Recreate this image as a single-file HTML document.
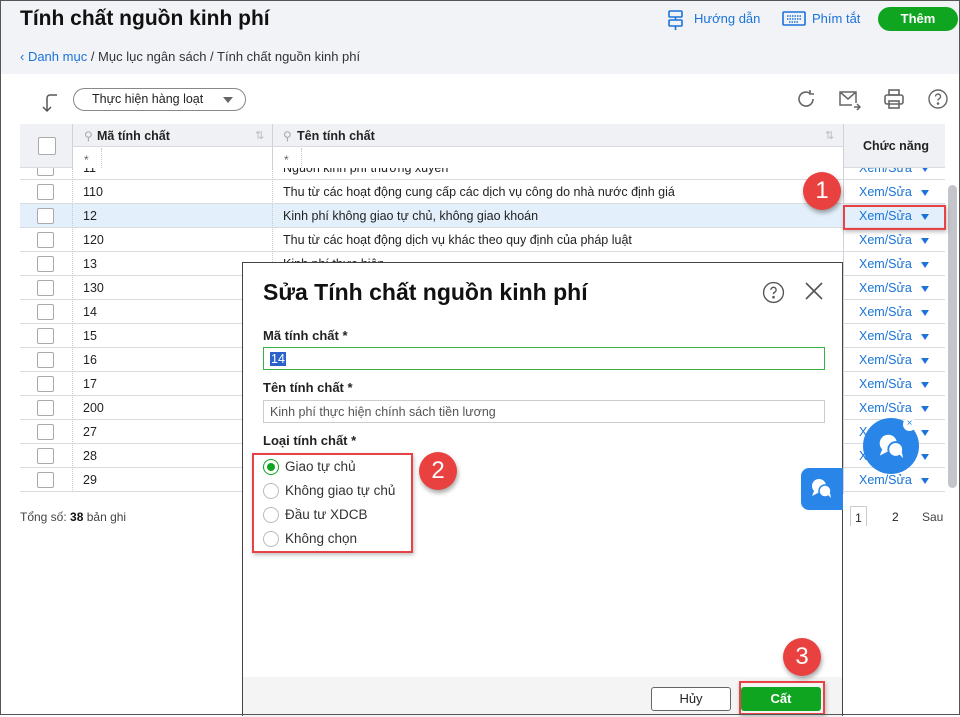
<!DOCTYPE html>
<html><head><meta charset="utf-8">
<style>
*{box-sizing:border-box;margin:0;padding:0}
body{width:960px;height:715px;overflow:hidden;font-family:"Liberation Sans",sans-serif;font-size:12px;color:#222;background:#fff;position:relative}
.frame{position:absolute;left:0;top:0;width:960px;height:715px;border:1px solid #555;pointer-events:none;z-index:50}
.top{position:absolute;left:0;top:0;width:960px;height:74px;background:#f2f3f7}
.a{position:absolute}
.title{left:20px;top:7px;font-size:21px;font-weight:bold;color:#111}
.bc{left:20px;top:49px;font-size:13px;color:#333}
.bc b{color:#1a73d9;font-weight:normal}
.blue{color:#1a73d9}
.row{position:absolute;left:20px;width:925px;height:24px;border-bottom:1px solid #d9dbe0;font-size:12.5px}
.row .cb{position:absolute;left:17px;top:4px;width:17px;height:16px;border:1px solid #aaa;border-radius:2px;background:#fff}
.row .c1{position:absolute;left:63px;top:5px}
.row .c2{position:absolute;left:263px;top:5px}
.row .c3{position:absolute;left:839px;top:5px;color:#1a73d9}
.row .c3:after{content:"";position:absolute;left:62px;top:5px;border:4px solid transparent;border-top:6px solid #1a73d9;border-bottom:0}
.vl{position:absolute;border-left:1px dotted #c7c9cf}
.lbl{font-size:13px;font-weight:bold;color:#222}
.inp{position:absolute;left:263px;width:562px;height:23px;border:1px solid #ccc;background:#fff;font-size:12.5px;padding:4px 6px;color:#555}
.rad{position:absolute;left:263px;width:16px;height:16px;border:1px solid #bbb;border-radius:50%;background:#fff}
.rt{position:absolute;left:285px;font-size:13.5px;color:#333}
.badge{position:absolute;width:38px;height:38px;border-radius:50%;background:#e8413f;color:#fff;font-size:24px;text-align:center;line-height:38px;box-shadow:1px 3px 5px rgba(0,0,0,.35);z-index:20}
.redbox{position:absolute;border:2px solid #e84245;z-index:19;box-shadow:1px 2px 4px rgba(0,0,0,.25)}
</style></head><body>
<div class="top"></div>
<div class="a title">Tính chất nguồn kinh phí</div>
<div class="a bc"><b>&lsaquo; Danh mục</b> / Mục lục ngân sách / Tính chất nguồn kinh phí</div>
<svg class="a" style="left:666px;top:9px" width="20" height="22" viewBox="0 0 20 22" fill="none" stroke="#1a73d9" stroke-width="1.6"><rect x="3" y="2" width="13" height="6" rx="1"/><rect x="3" y="11" width="13" height="6" rx="1"/><path d="M9.5 8v3M9.5 17v4"/></svg>
<div class="a blue" style="left:694px;top:11px;font-size:13px">Hướng dẫn</div>
<svg class="a" style="left:782px;top:11px" width="24" height="16" viewBox="0 0 24 16" fill="none" stroke="#1a73d9" stroke-width="1.6"><rect x="1" y="1" width="22" height="13" rx="1"/><path d="M5 5h14M5 8h14M7 11h10" stroke-dasharray="1.5 1"/></svg>
<div class="a blue" style="left:812px;top:11px;font-size:13px">Phím tắt</div>
<div class="a" style="left:878px;top:7px;width:80px;height:24px;border-radius:12px;background:#10a520;color:#fff;font-weight:bold;font-size:13px;text-align:center;line-height:24px">Thêm</div>

<svg class="a" style="left:40px;top:92px" width="20" height="22" viewBox="0 0 20 22" fill="none" stroke="#555" stroke-width="1.5"><path d="M17 3h-7a3 3 0 0 0-3 3v13M3 15l4 4 4-4"/></svg>
<div class="a" style="left:73px;top:88px;width:173px;height:23px;border:1.5px solid #888;border-radius:12px;font-size:12.5px;padding:3px 0 0 18px">Thực hiện hàng loạt<span style="position:absolute;right:12px;top:8px;border:5px solid transparent;border-top:6px solid #666;border-bottom:0"></span></div>
<svg class="a" style="left:795px;top:88px" width="22" height="22" viewBox="0 0 22 22" fill="none" stroke="#666" stroke-width="1.6"><path d="M18 11a7 7 0 1 1-3-5.7M15 2v4h4"/></svg>
<svg class="a" style="left:838px;top:89px" width="24" height="22" viewBox="0 0 24 22" fill="none" stroke="#666" stroke-width="1.5"><path d="M18 14V3H2v13h12M2 3l8 7 8-7M16 18h6M19 15l3 3-3 3"/></svg>
<svg class="a" style="left:883px;top:88px" width="22" height="22" viewBox="0 0 22 22" fill="none" stroke="#666" stroke-width="1.6"><rect x="6" y="2" width="10" height="5"/><rect x="2" y="7" width="18" height="9" rx="2"/><rect x="6" y="13" width="10" height="7"/></svg>
<svg class="a" style="left:927px;top:88px" width="22" height="22" viewBox="0 0 22 22" fill="none" stroke="#666" stroke-width="1.4"><circle cx="11" cy="11" r="9"/><path d="M8.5 8.5a2.5 2.5 0 1 1 3.5 2.3c-.8.4-1 .9-1 1.7"/><circle cx="11" cy="15.5" r=".6" fill="#666"/></svg>

<!-- table header -->
<div class="a" style="left:20px;top:124px;width:925px;height:44px;background:#f0f1f4;border-bottom:1px solid #d9dbe0"></div>
<div class="a" style="left:72px;top:146px;width:771px;height:22px;background:#fff;border-top:1px solid #d9dbe0"></div>
<div class="a" style="left:72px;top:124px;height:44px;border-left:1px solid #d0d2d8"></div>
<div class="a" style="left:272px;top:124px;height:44px;border-left:1px solid #d0d2d8"></div>
<div class="a" style="left:843px;top:124px;height:370px;border-left:1px solid #d0d2d8"></div>
<div class="a" style="left:38px;top:137px;width:18px;height:18px;border:1px solid #aaa;border-radius:2px;background:#fff"></div>
<div class="a" style="left:84px;top:129px;color:#aaa">⚲</div>
<div class="a" style="left:97px;top:129px;font-weight:bold;font-size:12.5px">Mã tính chất</div>
<div class="a" style="left:255px;top:129px;color:#bbb;font-size:11px">⇅</div>
<div class="a" style="left:283px;top:129px;color:#aaa">⚲</div>
<div class="a" style="left:297px;top:129px;font-weight:bold;font-size:12.5px">Tên tính chất</div>
<div class="a" style="left:825px;top:129px;color:#bbb;font-size:11px">⇅</div>
<div class="a" style="left:863px;top:139px;font-weight:bold;font-size:12.5px">Chức năng</div>
<div class="a" style="left:84px;top:153px;color:#666">*</div>
<div class="a" style="left:284px;top:153px;color:#666">*</div>
<div class="vl" style="left:101px;top:148px;height:20px"></div>
<div class="vl" style="left:301px;top:148px;height:20px"></div>

<div class="a" style="left:20px;top:168px;width:925px;height:326px;overflow:hidden">
<div class="row" style="left:0;top:-12px"><div class="cb"></div><div class="c1">11</div><div class="c2">Nguồn kinh phí thường xuyên</div><div class="c3">Xem/Sửa</div></div>
<div class="row" style="left:0;top:12px"><div class="cb"></div><div class="c1">110</div><div class="c2">Thu từ các hoạt động cung cấp các dịch vụ công do nhà nước định giá</div><div class="c3">Xem/Sửa</div></div>
<div class="row" style="left:0;top:36px;background:#e3f0fc"><div class="cb"></div><div class="c1">12</div><div class="c2">Kinh phí không giao tự chủ, không giao khoán</div><div class="c3">Xem/Sửa</div></div>
<div class="row" style="left:0;top:60px"><div class="cb"></div><div class="c1">120</div><div class="c2">Thu từ các hoạt động dịch vụ khác theo quy định của pháp luật</div><div class="c3">Xem/Sửa</div></div>
<div class="row" style="left:0;top:84px"><div class="cb"></div><div class="c1">13</div><div class="c2">Kinh phí thực hiện</div><div class="c3">Xem/Sửa</div></div>
<div class="row" style="left:0;top:108px"><div class="cb"></div><div class="c1">130</div><div class="c3">Xem/Sửa</div></div>
<div class="row" style="left:0;top:132px"><div class="cb"></div><div class="c1">14</div><div class="c3">Xem/Sửa</div></div>
<div class="row" style="left:0;top:156px"><div class="cb"></div><div class="c1">15</div><div class="c3">Xem/Sửa</div></div>
<div class="row" style="left:0;top:180px"><div class="cb"></div><div class="c1">16</div><div class="c3">Xem/Sửa</div></div>
<div class="row" style="left:0;top:204px"><div class="cb"></div><div class="c1">17</div><div class="c3">Xem/Sửa</div></div>
<div class="row" style="left:0;top:228px"><div class="cb"></div><div class="c1">200</div><div class="c3">Xem/Sửa</div></div>
<div class="row" style="left:0;top:252px"><div class="cb"></div><div class="c1">27</div><div class="c3">Xem/Sửa</div></div>
<div class="row" style="left:0;top:276px"><div class="cb"></div><div class="c1">28</div><div class="c3">Xem/Sửa</div></div>
<div class="row" style="left:0;top:300px"><div class="cb"></div><div class="c1">29</div><div class="c3">Xem/Sửa</div></div>
<div class="vl" style="left:52px;top:0;height:324px"></div>
<div class="vl" style="left:252px;top:0;height:324px"></div>
</div>
<div class="a" style="left:948px;top:185px;width:9px;height:303px;background:#c3c5cb;border-radius:5px"></div>
<div class="a" style="left:20px;top:510px;font-size:12px;color:#444">Tổng số: <b style="color:#111">38</b> bản ghi</div>
<div class="a" style="left:850px;top:506px;width:17px;height:20px;border:1px solid #ccc;border-bottom:0;text-align:center;padding-top:4px">1</div>
<div class="a" style="left:892px;top:510px">2</div>
<div class="a" style="left:922px;top:510px;color:#444">Sau</div>

<!-- dialog -->
<div class="a" style="left:242px;top:262px;width:601px;height:454px;background:#fff;border:1px solid #444;z-index:10">
  <div class="a" style="left:20px;top:16px;font-size:23px;font-weight:bold;color:#111">Sửa Tính chất nguồn kinh phí</div>
  <svg class="a" style="left:519px;top:18px" width="23" height="23" viewBox="0 0 22 22" fill="none" stroke="#555" stroke-width="1.3"><circle cx="11" cy="11" r="9.5"/><path d="M8.5 8.5a2.5 2.5 0 1 1 3.5 2.3c-.8.4-1 .9-1 1.7"/><circle cx="11" cy="15.5" r=".6" fill="#555"/></svg>
  <svg class="a" style="left:561px;top:18px" width="20" height="20" viewBox="0 0 20 20" stroke="#555" stroke-width="1.6"><path d="M2 2l16 16M18 2L2 18"/></svg>
  <div class="a" style="left:0;top:414px;width:599px;height:40px;background:#f4f4f4"></div>
  <div class="a" style="left:408px;top:424px;width:80px;height:24px;border:1px solid #666;border-radius:3px;background:#fff;text-align:center;line-height:22px;font-size:13px">Hủy</div>
  <div class="a" style="left:498px;top:424px;width:80px;height:24px;border-radius:3px;background:#10a520;color:#fff;font-weight:bold;text-align:center;line-height:24px;font-size:13px">Cất</div>
</div>
<div class="a lbl" style="left:263px;top:328px;z-index:11">Mã tính chất *</div>
<div class="inp" style="top:347px;border:1.5px solid #3cb043;z-index:11;color:#fff"><span style="background:#2a62c9;padding:0 1px">14</span></div>
<div class="a lbl" style="left:263px;top:380px;z-index:11">Tên tính chất *</div>
<div class="inp" style="top:400px;z-index:11">Kinh phí thực hiện chính sách tiền lương</div>
<div class="a lbl" style="left:263px;top:433px;z-index:11">Loại tính chất *</div>
<div class="rad" style="top:459px;border-color:#10a520;z-index:11"><div style="width:8px;height:8px;border-radius:50%;background:#10a520;margin:3px"></div></div>
<div class="rt" style="top:459px;z-index:11">Giao tự chủ</div>
<div class="rad" style="top:483px;z-index:11"></div><div class="rt" style="top:483px;z-index:11">Không giao tự chủ</div>
<div class="rad" style="top:507px;z-index:11"></div><div class="rt" style="top:507px;z-index:11">Đầu tư XDCB</div>
<div class="rad" style="top:531px;z-index:11"></div><div class="rt" style="top:531px;z-index:11">Không chọn</div>

<!-- annotations -->
<div class="redbox" style="left:843px;top:205px;width:103px;height:25px"></div>
<div class="badge" style="left:803px;top:172px">1</div>
<div class="redbox" style="left:252px;top:453px;width:161px;height:100px"></div>
<div class="badge" style="left:419px;top:452px">2</div>
<div class="redbox" style="left:739px;top:681px;width:86px;height:34px"></div>
<div class="badge" style="left:783px;top:638px">3</div>

<!-- chat widgets -->
<div class="a" style="left:801px;top:468px;width:42px;height:42px;background:#2a85e8;border-radius:8px 0 0 8px;z-index:12"></div>
<svg class="a" style="left:809px;top:476px;z-index:13" width="26" height="26" viewBox="0 0 26 26" fill="#fff"><circle cx="10" cy="10" r="7"/><path d="M5 15l-2 5 6-3z"/><circle cx="16" cy="15" r="6" stroke="#2a85e8" stroke-width="1.5"/><path d="M19 19l3 3-1-5z"/></svg>
<div class="a" style="left:863px;top:418px;width:56px;height:56px;border-radius:50%;background:#2a85e8;z-index:12"></div>
<svg class="a" style="left:876px;top:431px;z-index:13" width="32" height="32" viewBox="0 0 26 26" fill="#fff"><circle cx="10" cy="10" r="7"/><path d="M5 15l-2 5 6-3z"/><circle cx="16" cy="15" r="6" stroke="#2a85e8" stroke-width="1.5"/><path d="M19 19l3 3-1-5z"/></svg>
<div class="a" style="left:903px;top:418px;width:13px;height:13px;border-radius:50%;background:#fff;color:#2a85e8;font-size:10px;line-height:12px;text-align:center;z-index:14">×</div>
<div class="frame"></div>
</body></html>
